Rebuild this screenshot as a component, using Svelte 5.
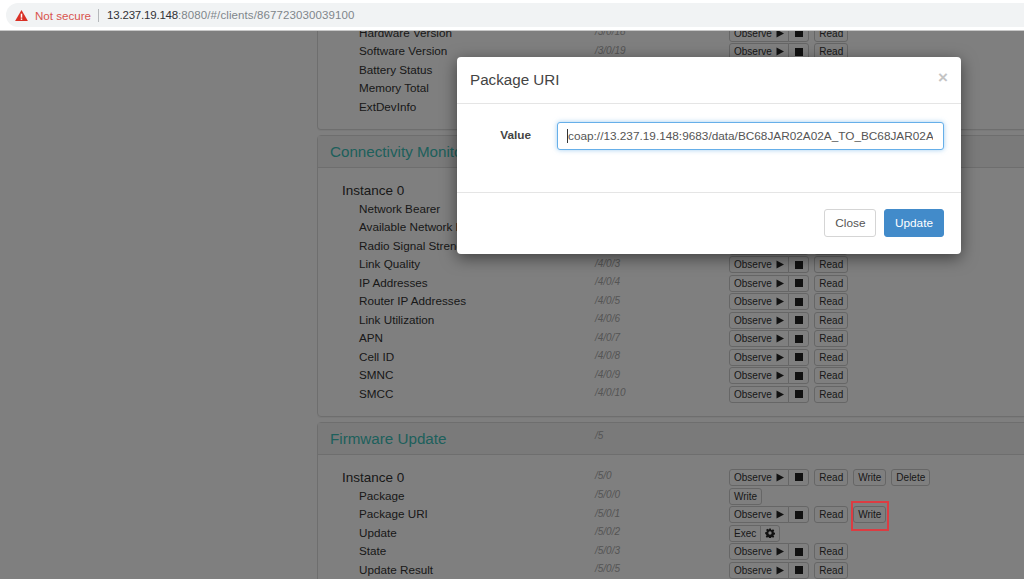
<script>
	let device = [
		{ name: 'Hardware Version', path: '/3/0/18' },
		{ name: 'Software Version', path: '/3/0/19' },
		{ name: 'Battery Status', path: '/3/0/20' },
		{ name: 'Memory Total', path: '/3/0/21' },
		{ name: 'ExtDevInfo', path: '/3/0/22' }
	];
	let connectivity = [
		['Network Bearer', '/4/0/0'],
		['Available Network Bearer', '/4/0/1'],
		['Radio Signal Strength', '/4/0/2'],
		['Link Quality', '/4/0/3'],
		['IP Addresses', '/4/0/4'],
		['Router IP Addresses', '/4/0/5'],
		['Link Utilization', '/4/0/6'],
		['APN', '/4/0/7'],
		['Cell ID', '/4/0/8'],
		['SMNC', '/4/0/9'],
		['SMCC', '/4/0/10']
	].map(([name, path]) => ({ name, path }));
	let firmware = [
		{ name: 'Package', path: '/5/0/0', kind: 'write' },
		{ name: 'Package URI', path: '/5/0/1', kind: 'both' },
		{ name: 'Update', path: '/5/0/2', kind: 'exec' },
		{ name: 'State', path: '/5/0/3' },
		{ name: 'Update Result', path: '/5/0/5' }
	];
</script>

{#snippet observe()}
	<span class="group">
		<button>Observe <svg width="8" height="9" viewBox="0 0 8 9"><path d="M0.5 0.5 L8 4.5 L0.5 8.5 Z" /></svg></button>
		<button class="icon"><svg width="8" height="8" viewBox="0 0 8 8"><rect width="8" height="8" /></svg></button>
	</span>
{/snippet}

{#snippet row(res)}
	<div class="row">
		<span class="name">{res.name}</span>
		<span class="path">{res.path}</span>
		<span class="actions">
			{#if res.kind === 'write'}
				<button>Write</button>
			{:else if res.kind === 'exec'}
				<span class="group">
					<button>Exec</button>
					<button class="gear"><svg width="10" height="10" viewBox="0 0 12 12"><path fill-rule="evenodd" d="M5 0.5h2l.3 1.6 1 .4 1.4-.9 1.4 1.4-.9 1.4.4 1 1.6.3v2l-1.6.3-.4 1 .9 1.4-1.4 1.4-1.4-.9-1 .4-.3 1.6H5l-.3-1.6-1-.4-1.4.9-1.4-1.4.9-1.4-.4-1L.2 7V5l1.6-.3.4-1-.9-1.4 1.4-1.4 1.4.9 1-.4zM6 4a2 2 0 1 0 0 4 2 2 0 0 0 0-4z" /></svg></button>
				</span>
			{:else}
				{@render observe()}
				<button>Read</button>
				{#if res.kind === 'both'}
					<span class="marked"><button>Write</button></span>
				{/if}
			{/if}
		</span>
	</div>
{/snippet}

<div class="chrome">
	<div class="omnibox">
		<svg class="warn" width="13" height="11" viewBox="0 0 14 12">
			<path fill="#d93025" d="M7 0 L14 12 L0 12 Z" />
			<rect x="6.2" y="4" width="1.6" height="4.4" fill="#fff" />
			<rect x="6.2" y="9.2" width="1.6" height="1.6" fill="#fff" />
		</svg>
		<span class="insecure">Not secure</span>
		<span class="sep"></span>
		<span class="url"><b>13.237.19.148</b>:8080/#/clients/867723030039100</span>
	</div>
</div>

<div class="viewport">
	<div class="page">
		<section class="panel first">
			<div class="body">
				{#each device as res}
					{@render row(res)}
				{/each}
			</div>
		</section>

		<section class="panel">
			<header><h3>Connectivity Monitoring</h3><span class="path">/4</span></header>
			<div class="body">
				<div class="instance"><span>Instance 0</span><span class="path">/4/0</span></div>
				{#each connectivity as res}
					{@render row(res)}
				{/each}
			</div>
		</section>

		<section class="panel">
			<header><h3>Firmware Update</h3><span class="path">/5</span></header>
			<div class="body">
				<div class="instance">
					<span>Instance 0</span>
					<span class="path">/5/0</span>
					<span class="actions">
						{@render observe()}
						<button>Read</button>
						<button>Write</button>
						<button>Delete</button>
					</span>
				</div>
				{#each firmware as res}
					{@render row(res)}
				{/each}
			</div>
		</section>
	</div>

	<div class="backdrop"></div>

	<div class="modal">
		<div class="modal-head">
			<h4>Package URI</h4>
			<span class="close">×</span>
		</div>
		<div class="modal-body">
			<label for="uri">Value</label>
			<div class="field">
				<input id="uri" type="text" value="coap://13.237.19.148:9683/data/BC68JAR02A02A_TO_BC68JAR02A" />
				<span class="caret"></span>
			</div>
		</div>
		<div class="modal-foot">
			<button class="btn">Close</button>
			<button class="btn primary">Update</button>
		</div>
	</div>
</div>

<style>
	:global(body) {
		margin: 0;
		background: #fff;
		font-family: 'Liberation Sans', Arial, sans-serif;
		color: #333;
		overflow: hidden;
	}
	.chrome {
		position: relative;
		z-index: 2;
		height: 30px;
		box-sizing: border-box;
		padding: 3px 0 3px 6px;
		background: #fff;
		box-shadow: 0 1px 0 #c8c8c8;
	}
	.omnibox {
		height: 24px;
		display: flex;
		align-items: center;
		padding-left: 9px;
		background: #f1f3f4;
		border-radius: 12px 0 0 12px;
		font-size: 11.5px;
	}
	.warn {
		margin-right: 7px;
	}
	.insecure {
		color: #d9534f;
		font-size: 11.6px;
	}
	.sep {
		width: 1px;
		height: 13px;
		background: #b5b8bb;
		margin: 0 8px 0 7px;
	}
	.url {
		color: #80868b;
		letter-spacing: 0.1px;
	}
	.url b {
		color: #303134;
		font-weight: normal;
		letter-spacing: -0.2px;
	}
	.viewport {
		position: relative;
		height: 549px;
		overflow: hidden;
		background: #fff;
	}
	.page {
		padding-left: 317px;
		margin-top: -20px;
		margin-right: -20px;
	}
	.panel {
		border: 1px solid #ddd;
		border-radius: 4px;
		margin-bottom: 5px;
		box-shadow: 0 1px 1px rgba(0, 0, 0, 0.05);
	}
	.panel.first {
		border-top: 0;
		border-radius: 0 0 4px 4px;
	}
	.panel header {
		height: 32px;
		box-sizing: border-box;
		background: #f5f5f5;
		border-bottom: 1px solid #ddd;
		display: flex;
		align-items: center;
		padding: 0 0 1px 12px;
	}
	h3 {
		margin: 0;
		width: 265px;
		font-size: 15.2px;
		font-weight: normal;
		color: #3cc0b8;
	}
	.panel header .path {
		margin-top: -5px;
	}
	.body {
		padding: 12px 12px 13px 24px;
	}
	.panel.first .body {
		padding-top: 13.5px;
	}
	.instance {
		display: flex;
		align-items: center;
		height: 19.5px;
		font-size: 13.5px;
	}
	.instance > span:first-child {
		width: 253px;
		margin-top: 1px;
	}
	.row {
		display: flex;
		align-items: center;
		height: 18.5px;
		font-size: 11.7px;
		padding-left: 17px;
	}
	.name {
		width: 236px;
		margin-top: -1px;
	}
	.path {
		width: 134px;
		margin-top: -2px;
		font-size: 10px;
		font-style: italic;
		color: #aaa;
	}
	.actions {
		display: flex;
		gap: 5px;
		align-items: center;
		margin-top: 1px;
	}
	.group {
		display: flex;
	}
	.group button + button {
		margin-left: -1px;
		border-radius: 0 3px 3px 0;
	}
	.group button:first-child {
		border-radius: 3px 0 0 3px;
	}
	button {
		font-family: inherit;
	}
	.actions button {
		height: 17px;
		padding: 0 4px;
		background: #fff;
		border: 1px solid #ccc;
		border-radius: 3px;
		font-size: 10px;
		color: #333;
		display: flex;
		align-items: center;
		gap: 4.5px;
	}
	.actions button.icon {
		padding: 0 5.5px;
	}
	.actions button.gear {
		padding: 0 4px;
	}
	.actions svg {
		fill: #222;
	}
	.marked {
		position: relative;
		display: flex;
	}
	.marked::after {
		content: '';
		position: absolute;
		z-index: 5;
		left: -2px;
		top: -5px;
		width: 38px;
		height: 30px;
		box-sizing: border-box;
		border: 2px solid #dc3c42;
	}
	.backdrop {
		position: absolute;
		inset: 0;
		background: rgba(0, 0, 0, 0.5);
	}
	.modal {
		position: absolute;
		left: 457px;
		top: 27px;
		width: 504px;
		background: #fff;
		border-radius: 4px;
		box-shadow: 0 4px 16px rgba(0, 0, 0, 0.5);
	}
	.modal-head {
		height: 47px;
		box-sizing: border-box;
		padding: 0 13px 2px;
		border-bottom: 1px solid #e5e5e5;
		display: flex;
		align-items: center;
		justify-content: space-between;
	}
	h4 {
		margin: 0;
		font-size: 15.2px;
		font-weight: normal;
		color: #444;
	}
	.close {
		font-size: 17px;
		font-weight: bold;
		color: #c4c4c4;
		margin: -3px 0 0;
	}
	.modal-body {
		height: 89px;
		box-sizing: border-box;
		padding: 17.5px 17px 0 0;
		display: flex;
		border-bottom: 1px solid #e5e5e5;
	}
	label {
		width: 74px;
		text-align: right;
		font-size: 11.8px;
		font-weight: bold;
		line-height: 27px;
		flex-shrink: 0;
		color: #444;
	}
	.field {
		position: relative;
		margin-left: 26px;
		flex: 1;
	}
	input {
		width: 100%;
		height: 28px;
		box-sizing: border-box;
		padding: 0 10px;
		border: 1px solid #66afe9;
		border-radius: 3px;
		outline: 0;
		box-shadow: 0 0 5px rgba(102, 175, 233, 0.6);
		font-family: inherit;
		font-size: 11.8px;
		color: #555;
	}
	.caret {
		position: absolute;
		left: 10px;
		top: 7px;
		width: 1px;
		height: 14px;
		background: #333;
	}
	.modal-foot {
		height: 61px;
		box-sizing: border-box;
		padding: 0 17px 1px 0;
		display: flex;
		justify-content: flex-end;
		align-items: center;
		gap: 7.5px;
	}
	.btn {
		height: 28px;
		padding: 0 10px;
		background: #fff;
		border: 1px solid #d5d5d5;
		border-radius: 3px;
		font-size: 11.8px;
		color: #555;
	}
	.btn.primary {
		background: #428bca;
		border-color: #428bca;
		color: #fff;
	}
</style>
